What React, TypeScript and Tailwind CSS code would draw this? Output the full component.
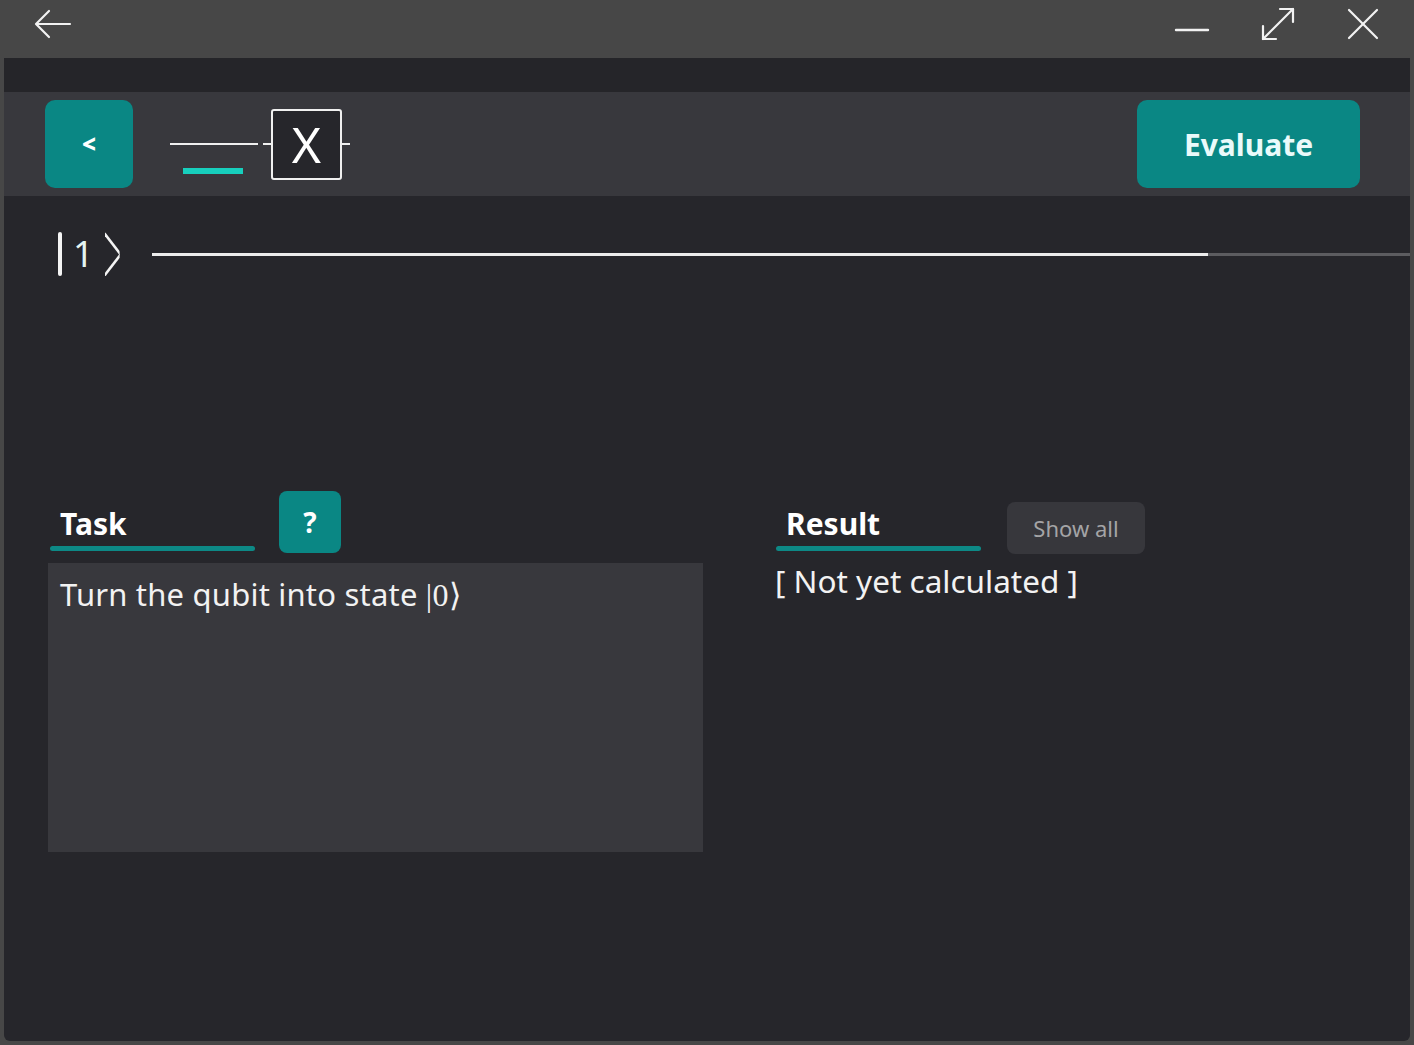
const ui = { fontFamily: '"Noto Sans", "Open Sans", sans-serif' }

function TitleBar() {
  return (
    <div className="flex h-[58px] shrink-0 items-center justify-between bg-[#474747] pb-[10px] pl-[34px] pr-[34px]">
      <svg width="38" height="30" viewBox="0 0 38 30" fill="none" stroke="#f2f2f2" strokeWidth="2.2" strokeLinecap="round" strokeLinejoin="round">
        <path d="M36 15H3" />
        <path d="M15 2L2 15l13 13" />
      </svg>
      <div className="flex items-center gap-[50px]">
        <svg width="36" height="40" viewBox="0 0 36 40" fill="none" stroke="#f2f2f2" strokeWidth="2.4" strokeLinecap="round">
          <path d="M2 26h32" />
        </svg>
        <svg width="36" height="36" viewBox="0 0 36 36" fill="none" stroke="#f2f2f2" strokeWidth="2.2" strokeLinecap="round" strokeLinejoin="round">
          <path d="M3 33L33 3" />
          <path d="M20 3h13v13" />
          <path d="M3 20v13h13" />
        </svg>
        <svg width="34" height="34" viewBox="0 0 34 34" fill="none" stroke="#f2f2f2" strokeWidth="2.2" strokeLinecap="round">
          <path d="M3 3l28 28" />
          <path d="M31 3L3 31" />
        </svg>
      </div>
    </div>
  )
}

function Toolbar() {
  return (
    <div className="flex h-[104px] shrink-0 items-center justify-between bg-[#38383d] pl-[41px] pr-[50px]">
      <div className="flex items-center">
        <button className="flex h-[88px] w-[88px] items-center justify-center rounded-[10px] bg-[#0a8784] text-[24px] font-black text-white">
          &lt;
        </button>
        <div className="ml-[37px] flex items-center">
          <div className="relative flex h-[70px] w-[88px] items-center">
            <div className="h-[2px] w-full bg-[#f0f0f0]" />
            <div className="absolute left-[13px] top-[59px] h-[6px] w-[60px] bg-[#17cfbd]" />
          </div>
          <div className="ml-[5px] h-[2px] w-[8px] bg-[#f0f0f0]" />
          <div className="flex h-[71px] w-[71px] items-center justify-center rounded-[3px] border-2 border-[#f0f0f0] bg-[#26262b] text-[50px] leading-none text-white">
            X
          </div>
          <div className="h-[2px] w-[8px] bg-[#f0f0f0]" />
        </div>
      </div>
      <button className="flex h-[88px] w-[223px] items-center justify-center rounded-[10px] bg-[#0a8784] text-[30px] font-bold text-[#eafafa]">
        Evaluate
      </button>
    </div>
  )
}

function Circuit() {
  return (
    <div className="mt-[36px] flex h-[44px] items-center pl-[54px]">
      <div className="flex h-[44px] w-[94px] items-center">
        <div className="h-[44px] w-[4px] rounded-sm bg-[#f4f4f4]" />
        <span className="ml-[11px] text-[36px] leading-none text-[#e4f4f2]">1</span>
        <div className="relative ml-[11px] h-[44px] w-[19px]">
          <div className="absolute inset-0 origin-left scale-x-[0.77] overflow-hidden">
            <div className="absolute left-[-15.5px] top-[6.5px] h-[31px] w-[31px] rotate-45 border-r-[3px] border-t-[3px] border-[#f4f4f4]" />
          </div>
        </div>
      </div>
      <div className="flex flex-1 items-center">
        <div className="h-[3px] w-[1056px] bg-[#ececec]" />
        <div className="h-[3px] flex-1 bg-[#5c5c60]" />
      </div>
    </div>
  )
}

function Heading({ label }: { label: string }) {
  return (
    <div className="w-[205px]">
      <div className="pl-[10px] text-[30px] font-bold leading-[36px] text-white">{label}</div>
      <div className="mt-[4px] h-[5px] rounded-full bg-[#0d8986]" />
    </div>
  )
}

export default function App() {
  return (
    <div className="flex h-[1045px] w-[1414px] flex-col bg-[#474747]" style={ui}>
      <TitleBar />
      <div className="mx-[4px] mb-[4px] flex flex-1 flex-col overflow-hidden rounded-b-[6px] bg-[#26262b]">
        <div className="h-[34px] shrink-0 bg-[#252529]" />
        <Toolbar />
        <Circuit />
        <div className="mt-[215px] flex pl-[44px]">
          <div className="w-[655px]">
            <div className="flex h-[60px] items-end pl-[2px]">
              <Heading label="Task" />
              <button className="ml-[24px] flex h-[62px] w-[62px] shrink-0 items-center justify-center self-start rounded-[8px] bg-[#0a8784] text-[28px] font-bold text-white">
                ?
              </button>
            </div>
            <div className="mt-[12px] h-[289px] bg-[#38383d] px-[12px] pt-[11px]">
              <p className="text-[31px] leading-[40px] tracking-[0.2px] text-[#f2f2f2]">
                Turn the qubit into state{' '}
                <span className="text-[32px] text-[#f2f2f2]" style={{ fontFamily: '"Liberation Serif", serif' }}>
                  |0⟩
                </span>
              </p>
            </div>
          </div>
          <div className="ml-[72px]">
            <div className="flex h-[60px] items-end pl-[1px]">
              <Heading label="Result" />
              <button className="mb-[-3px] ml-[26px] flex h-[52px] w-[138px] items-center justify-center rounded-[8px] bg-[#37373c] text-[22px] text-[#a4a4a6]">
                Show all
              </button>
            </div>
            <div className="mt-[10px] text-[31.5px] leading-[40px] text-[#f2f2f2]">[ Not yet calculated ]</div>
          </div>
        </div>
      </div>
    </div>
  )
}
